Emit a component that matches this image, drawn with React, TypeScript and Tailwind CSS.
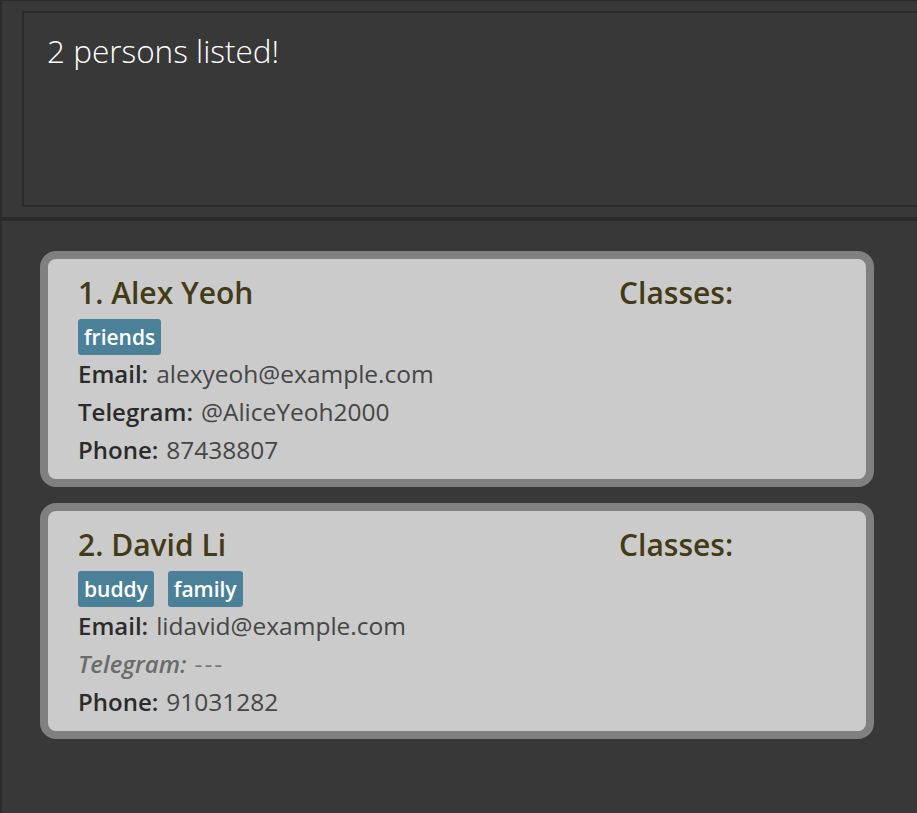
import React from 'react';

interface Person {
  name: string;
  tags: string[];
  email: string;
  telegram: string | null;
  phone: string;
}

const persons: Person[] = [
  { name: 'Alex Yeoh', tags: ['friends'], email: 'alexyeoh@example.com', telegram: '@AliceYeoh2000', phone: '87438807' },
  { name: 'David Li', tags: ['buddy', 'family'], email: 'lidavid@example.com', telegram: null, phone: '91031282' },
];

function Field({ label, value, muted }: { label: string; value: string; muted?: boolean }) {
  return (
    <div className={`flex items-baseline h-[38px] ${muted ? 'italic text-[#6b6b6b]' : ''}`}>
      <span className={`text-[24px] font-semibold ${muted ? '' : 'text-[#2b2b2b]'}`}>{label}</span>
      <span className={`ml-[8px] text-[24.5px] ${muted ? 'not-italic tracking-[2px] text-[#777777]' : 'text-[#464646]'}`}>{value}</span>
    </div>
  );
}

function PersonCard({ person, index }: { person: Person; index: number }) {
  return (
    <div className="w-[834px] h-[236px] rounded-[16px] border-[8px] border-[#808080] bg-[#cbcbcb]">
      <div className="grid grid-cols-[541px_1fr] pl-[30px] pt-[14px]">
        {/* Details */}
        <div className="flex flex-col">
          <div className="text-[30px] leading-[40px] font-semibold text-[#433b17]">
            {index + 1}. {person.name}
          </div>
          <div className="flex gap-[14px] mt-[6px]">
            {person.tags.map((tag) => (
              <span
                key={tag}
                className="h-[36px] px-[6px] rounded-[3px] bg-[#4a8198] text-white text-[21px] leading-[36px] font-semibold"
              >
                {tag}
              </span>
            ))}
          </div>
          <div className="flex flex-col leading-[38px]">
            <Field label="Email:" value={person.email} />
            <Field label="Telegram:" value={person.telegram ?? '---'} muted={!person.telegram} />
            <Field label="Phone:" value={person.phone} />
          </div>
        </div>

        {/* Classes */}
        <div className="text-[30px] leading-[40px] font-semibold text-[#433b17]">Classes:</div>
      </div>
    </div>
  );
}

export default function App() {
  return (
    <div className="min-h-screen bg-[#383838] flex flex-col" style={{ fontFamily: '"Open Sans", "Noto Sans", sans-serif' }}>
      {/* Result display */}
      <div className="h-[217px] border-t border-l-2 border-[#2b2b2b] pt-[10px] pl-[20px] overflow-hidden">
        <div className="h-[196px] border-t-2 border-l-2 border-b-2 border-[#2b2b2b] pl-[23px] pt-[18px]">
          <p className="text-[31.5px] leading-[40px] font-light text-white">2 persons listed!</p>
        </div>
      </div>

      <div className="h-[4px] bg-[#2b2b2b]" />

      {/* Person list */}
      <div className="flex-1 border-l-2 border-[#2b2b2b] pt-[30px] pl-[38px] flex flex-col gap-[16px]">
        {persons.map((p, i) => (
          <PersonCard key={p.name} person={p} index={i} />
        ))}
      </div>
    </div>
  );
}
